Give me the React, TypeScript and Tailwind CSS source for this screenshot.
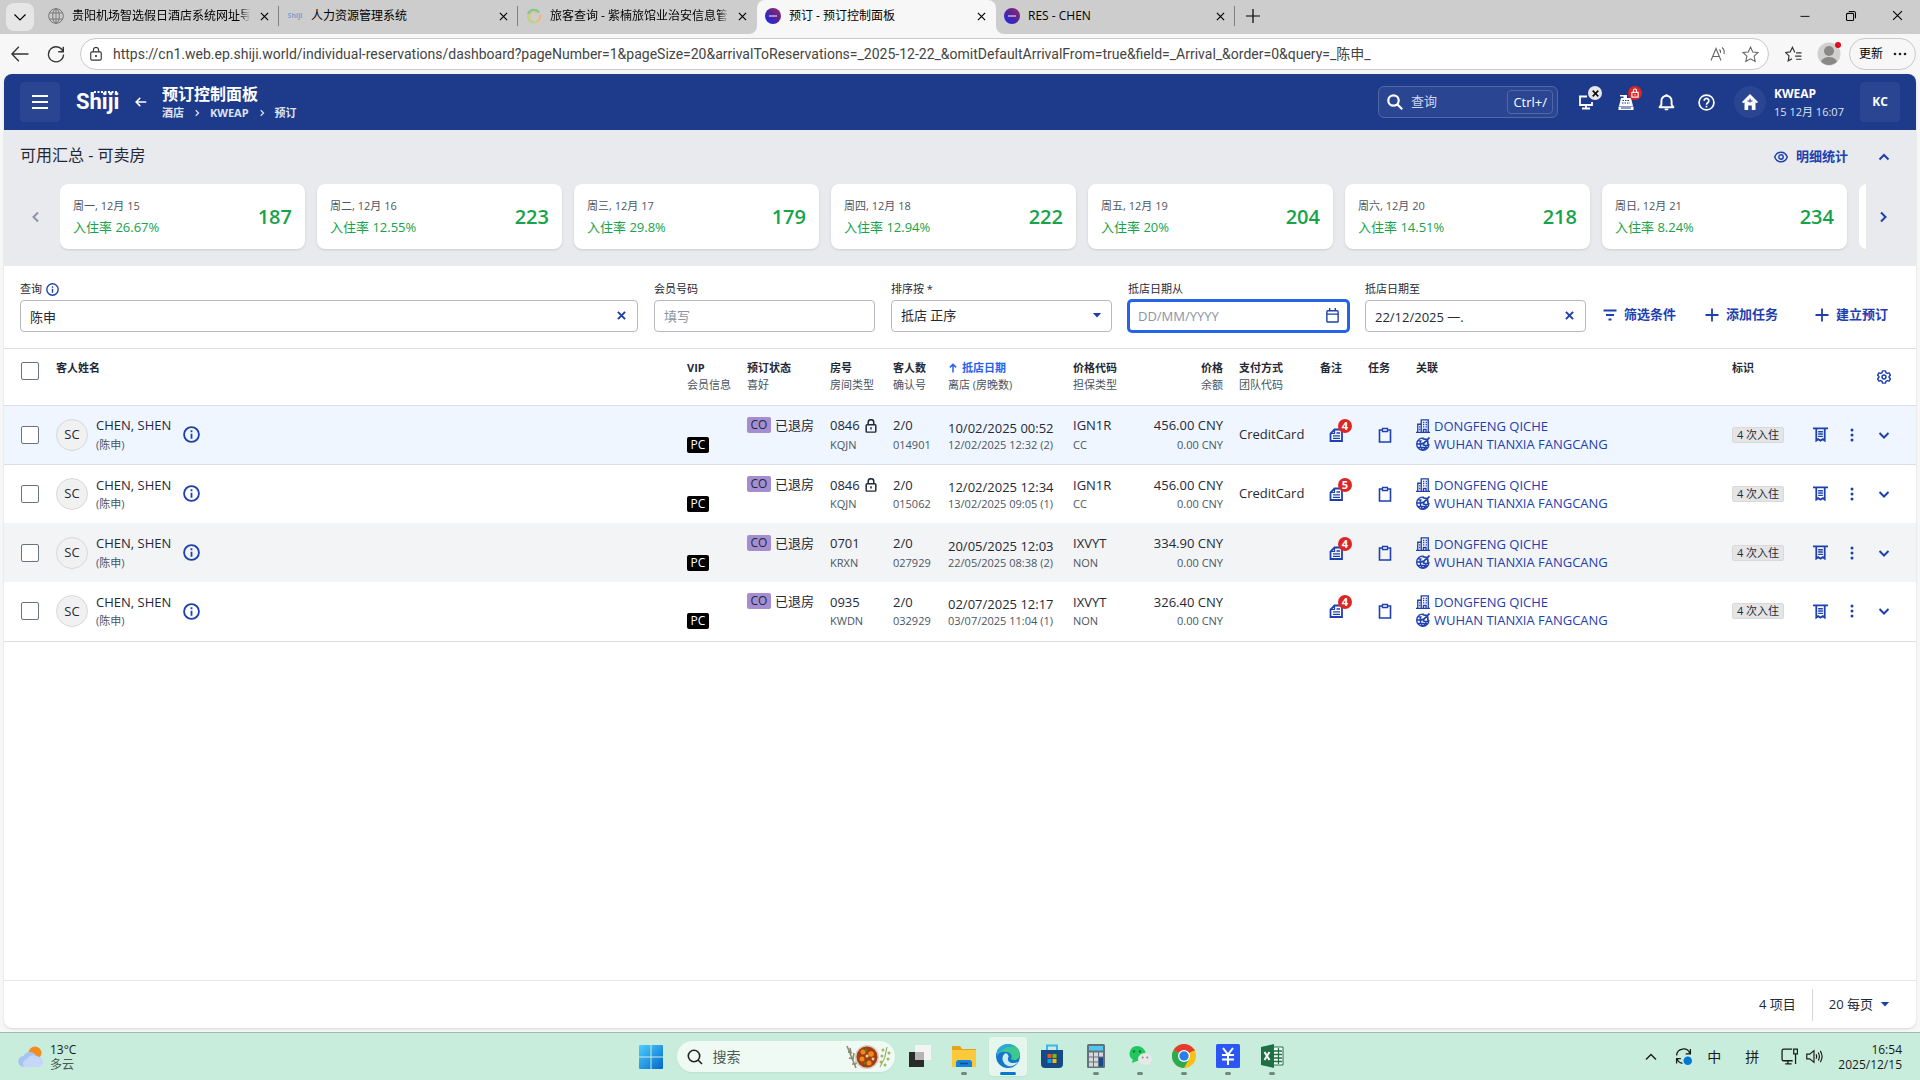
import React from "react";

type P = { className?: string };
type SP = P & { children: React.ReactNode; box?: string; sw?: number };

function Line({ className = "size-4", children, box = "0 0 16 16", sw = 1.5 }: SP) {
  return (
    <svg viewBox={box} className={className} fill="none" stroke="currentColor" strokeWidth={sw} aria-hidden="true">
      {children}
    </svg>
  );
}

const Cross = ({ className = "size-2.5", sw = 1.3 }: P & { sw?: number }) => (
  <Line box="0 0 10 10" className={className} sw={sw}>
    <path d="M1 1l8 8M9 1l-8 8" />
  </Line>
);
const Caret = () => (
  <svg viewBox="0 0 10 6" className="h-[5px] w-2.5 shrink-0" aria-hidden="true">
    <path d="M0 0h10L5 5.5z" fill="#1e40af" />
  </svg>
);
const Chevron = ({ d, className = "size-4" }: P & { d: string }) => (
  <Line className={className} sw={2}>
    <path d={d} />
  </Line>
);
const DOWN = "M3.5 6l4.5 4.5L12.500 6";
const UP = "M3.5 10.500L8 6l4.500 4.500";
const RIGHT = "M6 3.500L10.500 8 6 12.500";
const LEFT = "M10 3.500L5.500 8l4.500 4.500";

const Info = ({ className = "size-4" }: P) => (
  <Line className={className} sw={1.7}>
    <circle cx="8" cy="8" r="7" />
    <path d="M8 7.200V12M8 4v1.800" />
  </Line>
);

/* ---------- browser chrome ---------- */

const Globe = () => (
  <Line className="size-4 text-[#777]" sw={1}>
    <circle cx="8" cy="8" r="7.300" />
    <ellipse cx="8" cy="8" rx="3.300" ry="7.300" />
    <path d="M8 .7v14.600M1.500 5h13M1.500 11h13" />
  </Line>
);
const Swirl = () => (
  <Line className="size-4" sw={2.2}>
    <path d="M2 6a6.300 6.300 0 0 1 11-1.500" stroke="#7fc98a" />
    <path d="M14 6.500a6.300 6.300 0 0 1-4 7.500" stroke="#f0b97a" />
    <path d="M9 14.200A6.300 6.300 0 0 1 1.900 7" stroke="#b5d67c" />
    <path d="M5 9.500a3.300 3.300 0 0 1 5.500-4" stroke="#e9c17c" strokeWidth="1.200" />
  </Line>
);
const Orb = () => (
  <svg viewBox="0 0 16 16" className="size-4" aria-hidden="true">
    <defs>
      <linearGradient id="orb" x1="0" y1="1" x2="1" y2="0">
        <stop offset="0" stopColor="#1028ff" />
        <stop offset=".55" stopColor="#5b2590" />
        <stop offset="1" stopColor="#9a2a6a" />
      </linearGradient>
    </defs>
    <circle cx="8" cy="8" r="8" fill="url(#orb)" />
    <path d="M4 8h8" stroke="#cdb8e6" strokeWidth="1.400" />
  </svg>
);
const MiniShiji = () => <span className="text-[7px] leading-4 font-bold text-[#7f9fd0]">Shiji</span>;

const tabs = [
  { title: "贵阳机场智选假日酒店系统网址导航", icon: <Globe />, shape: "bg-[#cdcdcd]", sep: true },
  { title: "人力资源管理系统", icon: <MiniShiji />, shape: "bg-[#cdcdcd]", sep: true },
  { title: "旅客查询 - 紫楠旅馆业治安信息管理", icon: <Swirl />, shape: "bg-[#cdcdcd] rounded-br-lg", sep: false },
  { title: "预订 - 预订控制面板", icon: <Orb />, shape: "active", sep: false },
  { title: "RES - CHEN", icon: <Orb />, shape: "bg-[#cdcdcd] rounded-bl-lg", sep: true },
];

function TabStrip() {
  return (
    <div className="flex h-[34px] bg-[#f7f7f7] text-xs text-black">
      <div className="flex w-10 items-center bg-[#cdcdcd] pl-1.5">
        <button aria-label="标签页操作" className="flex h-7 w-7 items-center justify-center rounded-lg bg-[#e6e6e6]">
          <Line className="size-4" sw={1.2}>
            <path d="M2.500 5.500L8 11l5.500-5.500" />
          </Line>
        </button>
      </div>
      {tabs.map((t) => {
        const active = t.shape === "active";
        return (
          <div
            key={t.title}
            className={
              active
                ? "w-[239px] bg-linear-to-b from-[#cdcdcd] from-50% to-[#f7f7f7] to-50%"
                : "w-[239px] " + t.shape
            }
          >
            <div
              className={
                "flex h-full items-center gap-2 pb-0.5 pl-2 " + (active ? "rounded-t-lg bg-[#f7f7f7]" : "")
              }
            >
              <span className="flex size-4 shrink-0 items-center justify-center">{t.icon}</span>
              <button
                className={
                  "h-5 flex-1 overflow-hidden text-left whitespace-nowrap " +
                  (t.title.length > 14 ? "mask-r-from-95%" : "")
                }
              >
                {t.title}
              </button>
              <button aria-label="关闭标签页" className="flex w-3 justify-center">
                <Cross className="size-[9px]" />
              </button>
              <span className={"h-5 w-px " + (t.sep ? "bg-[#808080]" : "")} />
            </div>
          </div>
        );
      })}
      <div className="flex flex-1 items-center justify-between bg-[#cdcdcd] pb-0.5">
        <button aria-label="新建标签页" className="flex w-9 justify-center">
          <Line className="size-4" sw={1.2}>
            <path d="M8 1v14M1 8h14" />
          </Line>
        </button>
        <div className="flex">
          <button aria-label="最小化" className="flex w-[46px] justify-center">
            <Line className="size-3" sw={1.2}><path d="M2 8.500h12" /></Line>
          </button>
          <button aria-label="还原" className="flex w-[46px] justify-center">
            <Line className="size-3" sw={1.4}>
              <rect x="2" y="4.500" width="9.500" height="9.500" rx="1.500" />
              <path d="M5 2h6.500A2.500 2.500 0 0 1 14 4.500V11" />
            </Line>
          </button>
          <button aria-label="关闭" className="flex w-[46px] justify-center">
            <Cross className="size-[11px]" sw={1} />
          </button>
        </div>
      </div>
    </div>
  );
}

function AddressBar() {
  return (
    <div className="flex h-10 items-center bg-[#f7f7f7] pr-1 text-[#333]">
      <button aria-label="后退" className="flex w-10 justify-center">
        <Line className="size-[18px]" sw={1.2}><path d="M15.500 8H1M7 1.500L.8 8 7 14.500" /></Line>
      </button>
      <button aria-label="刷新" className="flex w-8 justify-center">
        <Line className="size-[18px]" sw={1.2}><path d="M14.300 6A6.700 6.700 0 1 0 14.700 8.500M14.500 1.500V6H10" /></Line>
      </button>
      <div className="ml-2 flex h-8 flex-1 items-center rounded-full border border-[#c9c9c9] bg-white pr-0.5 pl-2">
        <Line className="size-3.5 text-[#333]" sw={1.3}>
          <rect x="2" y="5.500" width="12" height="9.500" rx="1.500" />
          <path d="M5 5.500V3.500a3 3 0 0 1 6 0v2" />
          <circle cx="8" cy="10.300" r=".6" fill="currentColor" />
        </Line>
        <label htmlFor="url" className="sr-only">地址</label>
        <input
          id="url"
          readOnly
          className="ml-2.5 w-0 flex-1 bg-transparent font-['Roboto','Noto_Sans_CJK_SC',sans-serif] text-sm text-[#444] outline-none"
          value="https://cn1.web.ep.shiji.world/individual-reservations/dashboard?pageNumber=1&pageSize=20&arrivalToReservations=_2025-12-22_&omitDefaultArrivalFrom=true&field=_Arrival_&order=0&query=_陈申_"
        />
        <button aria-label="朗读此页内容" className="flex w-8 justify-center text-[#666]">
          <Line className="size-4" sw={1.1}>
            <path d="M1 14.500L6 2.500l5 12M2.800 10.500h6.500M9.500 3.500q1.500 1.500 1 3.500M12 1.500q3 2.500 2 6.500" />
          </Line>
        </button>
        <button aria-label="收藏" className="flex w-8 justify-center text-[#666]">
          <Line className="size-[17px]" sw={1}>
            <path d="M8 1l2.100 4.600 5 .5-3.700 3.400 1 5L8 12l-4.400 2.500 1-5L.9 6.100l5-.5z" />
          </Line>
        </button>
      </div>
      <button aria-label="收藏夹" className="ml-3 flex w-6 justify-center">
        <Line className="size-[17px]" sw={1.1}>
          <path d="M9.500 5.600H9L7 1.200 4.900 5.600l-4.400.5 3.300 3.200-.8 4.700 3.600-2M10.500 6.500h5M9.500 9.500h6M10.500 12.500h5" />
        </Line>
      </button>
      <button aria-label="用户配置" className="relative ml-3 size-6">
        <svg viewBox="0 0 24 24" className="size-6">
          <circle cx="12" cy="12" r="11.500" fill="#d2d0ce" />
          <circle cx="12" cy="9" r="5" fill="#8a8886" />
          <path d="M4 19.500Q6 15 12 15t8 4.500a11 11 0 0 1-16 0z" fill="#8a8886" />
        </svg>
        <span className="absolute top-0 right-0 size-1.5 rounded-full bg-[#e00b1c]" />
      </button>
      <button className="ml-2 flex h-8 w-[67px] items-center justify-between rounded-full border border-[#c9c9c9] pr-[7px] pl-[9px] text-xs text-black">
        更新
        <svg viewBox="0 0 16 4" className="h-1 w-4"><g fill="#222"><circle cx="3" cy="2" r="1.300" /><circle cx="8" cy="2" r="1.300" /><circle cx="13" cy="2" r="1.300" /></g></svg>
      </button>
    </div>
  );
}

/* ---------- application ---------- */

function AppHeader() {
  return (
    <header className="flex h-14 items-center bg-[#1e3a8a] px-4 text-white">
      <button aria-label="菜单" className="flex size-10 items-center justify-center rounded bg-[#2a4592]">
        <Line className="size-4" sw={2}><path d="M0 2h16M0 8h16M0 14h16" /></Line>
      </button>
      <a href="#home" className="relative ml-4 w-[42px] font-['Roboto',sans-serif] text-[22px] leading-8 font-bold">
        Shiji
        <svg viewBox="0 0 24 4" className="absolute top-1 right-0 h-1 w-6" aria-hidden="true">
          <path d="M0 2h24" stroke="#fff" strokeWidth="2" strokeDasharray="2 1.500" />
        </svg>
      </a>
      <button aria-label="返回" className="ml-4 flex w-3.5 justify-center">
        <Line className="size-3" sw={2}><path d="M15 8H2M7 2.500L1.500 8 7 13.500" /></Line>
      </button>
      <div className="ml-3.5 flex flex-1 flex-col pt-px">
        <h1 className="text-base leading-5 font-bold">预订控制面板</h1>
        <nav aria-label="breadcrumb" className="flex items-center gap-2 text-[11px] leading-[18px] font-bold text-[#dbe3f5]">
          <a href="#hotel">酒店</a>
          <Chevron d={RIGHT} className="size-2.5" />
          <a href="#kweap">KWEAP</a>
          <Chevron d={RIGHT} className="size-2.5" />
          <a href="#reservations">预订</a>
        </nav>
      </div>
      <div className="flex h-8 w-[180px] items-center rounded-md border border-[#5068a6] bg-[#2a4592] pr-1 pl-2">
        <Line className="size-4" sw={2.2}><circle cx="6.500" cy="6.500" r="5.200" /><path d="M10.500 10.500L15.200 15.200" /></Line>
        <input aria-label="查询" placeholder="查询" className="ml-2 w-0 flex-1 bg-transparent text-[13px] outline-none placeholder:text-[#cdd6ec]" />
        <kbd className="rounded border border-[#5068a6] px-[5px] font-[inherit] text-[13px] leading-[22px]">Ctrl+/</kbd>
      </div>
      <button aria-label="连接" className="relative ml-2 flex w-10 justify-center">
        <Line className="size-4" sw={1.800}><path d="M9 2.500H2v8.500h12V8M8 11v3.500M4 14.500h8" /></Line>
        <span className="absolute -top-2 left-[22px] flex size-3.5 items-center justify-center rounded-full bg-[#e5e7eb] text-[#111]">
          <Cross className="size-[7px]" sw={2.4} />
        </span>
      </button>
      <button aria-label="收银" className="relative flex w-10 justify-center">
        <svg viewBox="0 0 16 16" className="size-4" fill="#fff">
          <path d="M2 1h7v3h4l2 8H1l2-8h2.500V2.500H2zM.5 12.500h15V16H.5z" />
          <path d="M4.500 6.500h7M4 9h8" stroke="#1e3a8a" strokeWidth="1.200" strokeDasharray="1.500 1" />
          <path d="M3 14h10" stroke="#1e3a8a" />
        </svg>
        <span className="absolute -top-2 left-[22px] flex size-3.5 items-center justify-center rounded-full bg-[#dc2626]">
          <Line className="size-2.5" sw={1.8}><rect x="3" y="7" width="10" height="7.500" /><path d="M5.500 7V4a2.500 2.500 0 0 1 5 0v3M8 10v2" /></Line>
        </span>
      </button>
      <button aria-label="通知" className="flex w-10 justify-center">
        <Line className="size-[17px]" sw={1.8}>
          <path d="M1.500 12.500h13L12.800 10V6.500a4.800 4.800 0 0 0-9.600 0V10z" strokeLinejoin="round" />
          <path d="M6.300 14.500h3.400M8 .3v1.500" />
        </Line>
      </button>
      <button aria-label="帮助" className="flex w-10 justify-center">
        <Line className="size-[17px]" sw={1.600}>
          <circle cx="8" cy="8" r="7" />
          <path d="M5.800 6.300a2.200 2.200 0 1 1 3.400 1.900Q8 9 8 10M8 11v1.600" />
        </Line>
      </button>
      <span className="ml-2 flex size-8 items-center justify-center rounded-full bg-[#2a4592]">
        <svg viewBox="0 0 18 18" className="size-[18px]" fill="#fff">
          <path d="M9 1l8 8-1.300 1.300L14.500 9.200V17h-3.700v-4.500H7.200V17H3.500V9.200l-1.200 1.100L1 9z" />
          <path d="M9 5.500v4M6.500 8h5" stroke="#1e3a8a" strokeWidth="1" />
        </svg>
      </span>
      <div className="ml-2 w-[86px] pt-px whitespace-nowrap">
        <p className="text-xs leading-[18px] font-bold">KWEAP</p>
        <p className="text-[11px] leading-[18px] text-[#dbe3f5]">15 12月 16:07</p>
      </div>
      <button className="flex size-10 items-center justify-center rounded bg-[#2a4592] text-xs font-bold">KC</button>
    </header>
  );
}

const days = [
  ["周一, 12月 15", "26.67%", "187"],
  ["周二, 12月 16", "12.55%", "223"],
  ["周三, 12月 17", "29.8%", "179"],
  ["周四, 12月 18", "12.94%", "222"],
  ["周五, 12月 19", "20%", "204"],
  ["周六, 12月 20", "14.51%", "218"],
  ["周日, 12月 21", "8.24%", "234"],
];

function Availability() {
  return (
    <section className="h-[136px] bg-[#e9eaee] text-[#1f2937]">
      <div className="flex h-[54px] items-center justify-between pr-4 pl-4">
        <h2 className="pb-1 text-base">可用汇总 - 可卖房</h2>
        <div className="flex items-center text-[#1e40af]">
          <button className="flex items-center gap-2 text-[13px] font-bold">
            <Line className="size-3.5" sw={1.7}>
              <path d="M.8 8Q3 2.500 8 2.500T15.200 8Q13 13.500 8 13.500T.8 8z" />
              <circle cx="8" cy="8" r="2.500" />
            </Line>
            明细统计
          </button>
          <button aria-label="收起" className="ml-5 flex w-8 justify-center"><Chevron d={UP} /></button>
        </div>
      </div>
      <div className="flex items-center">
        <button aria-label="上一页" className="flex w-14 justify-center pl-2 text-[#8b93a5]"><Chevron d={LEFT} /></button>
        <ul className="-mb-1 flex flex-1 gap-3 overflow-hidden pb-1">
          {days.map(([d, rate, n]) => (
            <li key={d} className="flex h-[65px] w-[245px] shrink-0 items-center justify-between rounded-lg bg-white px-[13px] shadow-sm">
              <div>
                <p className="text-[11px] leading-5 text-[#4b5563]">{d}</p>
                <p className="text-[13px] leading-[22px] text-[#16a34a]">入住率 {rate}</p>
              </div>
              <p className="text-xl font-semibold text-[#16a34a]">{n}</p>
            </li>
          ))}
          <li className="h-[65px] w-[245px] shrink-0 rounded-lg bg-white" />
        </ul>
        <button aria-label="下一页" className="flex w-[50px] justify-center pr-4 text-[#1e40af]"><Chevron d={RIGHT} /></button>
      </div>
    </section>
  );
}

const base = "h-8 w-full rounded bg-white text-[13px] text-[#1f2937] outline-none placeholder:text-[#8b93a5]";
const field = base + " border border-[#b6bac5] px-[9px]";

function Filters() {
  return (
    <form className="flex h-[83px] items-end border-b border-[#dcdee2] pr-7 pb-4 pl-4 text-[#1f2937]" onSubmit={(e) => e.preventDefault()}>
      <div className="mr-4 flex-1">
        <div className="flex h-[22px] items-center gap-1 text-[11px]">
          <label htmlFor="q">查询</label>
          <Info className="size-[13px] text-[#1e40af]" />
        </div>
        <div className="relative">
          <input id="q" className={field} defaultValue="陈申" />
          <button aria-label="清除" className="absolute top-[11px] right-3 text-[#1e40af]"><Cross className="size-[9px]" sw={2.2} /></button>
        </div>
      </div>
      <div className="mr-4 w-[221px]">
        <label htmlFor="member" className="block text-[11px] leading-[22px]">会员号码</label>
        <input id="member" className={field} placeholder="填写" />
      </div>
      <div className="mr-4 w-[221px]">
        <label htmlFor="sort" className="block text-[11px] leading-[22px]">排序按 *</label>
        <div className="relative">
          <select id="sort" className={field + " appearance-none"}>
            <option>抵店 正序</option>
          </select>
          <span className="pointer-events-none absolute top-[13px] right-2.5"><Caret /></span>
        </div>
      </div>
      <div className="mr-4 w-[221px]">
        <label htmlFor="from" className="block text-[11px] leading-[22px]">抵店日期从</label>
        <div className="relative">
          <input id="from" className={base + " border-2 border-[#2563eb] px-2 ring-1 ring-[#2563eb]"} placeholder="DD/MM/YYYY" />
          <button aria-label="选择日期" className="absolute top-2 right-[9px] text-[#1e40af]">
            <Line className="size-[15px]" sw={1.5}>
              <rect x="2" y="3" width="12" height="12" rx="1" />
              <path d="M2 6.500h12M5 0v3M11 0v3" />
            </Line>
          </button>
        </div>
      </div>
      <div className="mr-4 w-[221px]">
        <label htmlFor="to" className="block text-[11px] leading-[22px]">抵店日期至</label>
        <div className="relative">
          <input id="to" className={field} defaultValue="22/12/2025 一." />
          <button aria-label="清除日期" className="absolute top-[11px] right-3 text-[#1e40af]"><Cross className="size-[9px]" sw={2.2} /></button>
        </div>
      </div>
      <div className="flex h-8 items-center pb-0.5 text-[13px] font-bold whitespace-nowrap text-[#1e40af]">
        <button className="flex items-center gap-1.5">
          <Line className="size-4" sw={1.8}><path d="M1.500 3.500h13M4 8h8M6.500 12.500h3" /></Line>
          筛选条件
        </button>
        <button className="ml-7 flex items-center gap-1.5">
          <Line className="size-4" sw={1.800}><path d="M8 1.500v13M1.500 8h13" /></Line>
          添加任务
        </button>
        <button className="ml-9 flex items-center gap-1.5">
          <Line className="size-4" sw={1.800}><path d="M8 1.500v13M1.500 8h13" /></Line>
          建立预订
        </button>
      </div>
    </form>
  );
}

const rows = [
  { id: 1, room: "0846", lock: true, type: "KQJN", conf: "014901", a: "10/02/2025 00:52", d: "12/02/2025 12:32 (2)", rate: "IGN1R", g: "CC", price: "456.00 CNY", pay: "CreditCard", notes: 4, cls: "bg-[#eff6ff] border-b border-[#d9dde5]" },
  { id: 2, room: "0846", lock: true, type: "KQJN", conf: "015062", a: "12/02/2025 12:34", d: "13/02/2025 09:05 (1)", rate: "IGN1R", g: "CC", price: "456.00 CNY", pay: "CreditCard", notes: 5, cls: "bg-white" },
  { id: 3, room: "0701", lock: false, type: "KRXN", conf: "027929", a: "20/05/2025 12:03", d: "22/05/2025 08:38 (2)", rate: "IXVYT", g: "NON", price: "334.90 CNY", pay: "", notes: 4, cls: "bg-[#f3f4f6]" },
  { id: 4, room: "0935", lock: false, type: "KWDN", conf: "032929", a: "02/07/2025 12:17", d: "03/07/2025 11:04 (1)", rate: "IXVYT", g: "NON", price: "326.40 CNY", pay: "", notes: 4, cls: "bg-white border-b border-[#dcdee2]" },
];

const Check = ({ label }: { label: string }) => (
  <input type="checkbox" aria-label={label} className="ml-[17px] block size-[18px] appearance-none rounded-xs border border-[#6b7280] bg-white" />
);

function Two({ a, b, low = false }: { a: React.ReactNode; b: React.ReactNode; low?: boolean }) {
  return (
    <>
      <span className={low ? "block pt-0.5 text-[13px] leading-[18px]" : "flex h-[19px] items-center text-[13px]"}>{a}</span>
      <span className={low ? "block text-[11px] leading-4 text-[#4b5563]" : "block text-[11px] leading-[17px] text-[#4b5563]"}>{b}</span>
    </>
  );
}

function Head({ a, b = "", right = false }: { a: React.ReactNode; b?: string; right?: boolean }) {
  return (
    <th scope="col" className={"pt-2.5 align-top leading-[17px] font-normal " + (right ? "pr-4 text-right" : "text-left")}>
      <span className="block font-bold">{a}</span>
      <span className="block text-[#4b5563]">{b}</span>
    </th>
  );
}

function Reservations() {
  return (
    <table className="w-full table-fixed border-collapse text-[#1f2937]">
      <colgroup>
        <col className="w-[52px]" />
        <col />
        <col className="w-[60px]" />
        <col className="w-[83px]" />
        <col className="w-[63px]" />
        <col className="w-[55px]" />
        <col className="w-[125px]" />
        <col className="w-[66px]" />
        <col className="w-[100px]" />
        <col className="w-[81px]" />
        <col className="w-12" />
        <col className="w-12" />
        <col className="w-[316px]" />
        <col className="w-[72px]" />
        <col className="w-8" />
        <col className="w-8" />
        <col className="w-12" />
      </colgroup>
      <thead>
        <tr className="h-14 border-b border-[#dcdee2] text-[11px] whitespace-nowrap">
          <td className="pt-[13px] align-top"><Check label="全选" /></td>
          <Head a="客人姓名" />
          <Head a="VIP" b="会员信息" />
          <Head a="预订状态" b="喜好" />
          <Head a="房号" b="房间类型" />
          <Head a="客人数" b="确认号" />
          <Head
            a={
              <button className="flex items-center gap-1 text-[#2563eb]">
                <Line className="size-2.5" sw={2.4}><path d="M8 15V2M3 7l5-5 5 5" /></Line>抵店日期
              </button>
            }
            b="离店 (房晚数)"
          />
          <Head a="价格代码" b="担保类型" />
          <Head a="价格" b="余额" right />
          <Head a="支付方式" b="团队代码" />
          <Head a="备注" />
          <Head a="任务" />
          <Head a="关联" />
          <Head a="标识" />
          <td />
          <td />
          <td className="text-[#1e40af]">
            <button aria-label="表格设置" className="flex w-8 justify-center">
              <Line className="size-3.5" sw={1.7}>
                <path d="M6.300 1h3.400l.5 2 1.600.9 2-.6 1.500 2.700L13.800 7.500v1l1.500 1.500-1.500 2.700-2-.6-1.600.9-.5 2H6.300l-.5-2-1.600-.9-2 .6L.7 10l1.500-1.500v-1L.7 6l1.500-2.700 2 .6L5.800 3z" strokeLinejoin="round" />
                <circle cx="8" cy="8" r="2.200" />
              </Line>
            </button>
          </td>
        </tr>
      </thead>
      <tbody>
        {rows.map((r) => (
          <tr key={r.id} className={"h-[59px] whitespace-nowrap " + r.cls}>
            <td><Check label={"选择 CHEN, SHEN " + r.conf} /></td>
            <td>
              <div className="flex items-center">
                <span className="flex size-8 items-center justify-center rounded-full border border-[#d6d8dc] bg-[#f1f1f1] text-[13px]">SC</span>
                <div className="ml-2"><Two a="CHEN, SHEN" b="(陈申)" /></div>
                <button aria-label="客人信息" className="ml-3 text-[#1e40af]"><Info className="size-[17px]" /></button>
              </div>
            </td>
            <td className="pt-4">
              <span className="inline-block w-[22px] rounded-xs bg-black text-center text-xs leading-4 text-white">PC</span>
            </td>
            <td className="pb-5">
              <div className="flex items-center text-[13px] leading-4">
                <span className="mr-1 w-6 rounded-xs bg-[#a48ed1] text-center text-xs leading-4">CO</span>
                已退房
              </div>
            </td>
            <td>
              <Two
                a={
                  <>
                    {r.room}
                    {r.lock && (
                      <Line className="ml-1 size-3.5" sw={1.7}>
                        <rect x="2.500" y="6.500" width="11" height="8.500" rx="1" />
                        <path d="M4.800 6.500V4a3.200 3.200 0 0 1 6.400 0v2.500M8 9.500v2.500" />
                      </Line>
                    )}
                  </>
                }
                b={r.type}
              />
            </td>
            <td><Two a="2/0" b={r.conf} /></td>
            <td><Two a={r.a} b={r.d} low /></td>
            <td><Two a={r.rate} b={r.g} /></td>
            <td className="pr-4 text-right">
              <div className="flex flex-col items-end"><Two a={r.price} b="0.00 CNY" /></div>
            </td>
            <td className="text-[13px]">{r.pay}</td>
            <td className="text-[#1e40af]">
              <button aria-label="备注" className="relative ml-2 block">
                <Line className="size-4" sw={1.8}>
                  <path d="M6.500 2.500H14V14H2.500V6.500z" />
                  <path d="M6.500 2.500v4h-4" strokeWidth="1.200" />
                  <path d="M8.500 6h3.500M5 8.800h7M5 11.300h7" strokeWidth="1.300" />
                </Line>
                <span className="absolute -top-2 left-2.5 size-3.5 rounded-full bg-[#dc2626] text-center text-[11px] leading-3.5 font-bold text-white">{r.notes}</span>
              </button>
            </td>
            <td className="text-[#1e40af]">
              <button aria-label="任务" className="ml-[9px] block">
                <Line className="size-4" sw={1.600}><path d="M2.500 3h11v12h-11z" /><path d="M5.500 1.500h5v3h-5z" fill="#fff" strokeWidth="1.300" /></Line>
              </button>
            </td>
            <td className="text-[13px] leading-[18px] text-[#1e40af]">
              <a href="#company" className="flex items-center gap-1">
                <Line className="size-3.5" sw={1.5}>
                  <path d="M0 15.300h16M2 15V6h4M6 15V1h8v14M8.500 15v-3h3v3" />
                  <path d="M8 4h1.500M11 4h1.500M8 6.500h1.500M11 6.500h1.500M8 9h1.500M11 9h1.500M3.500 9H5M3.500 12H5" />
                </Line>
                DONGFENG QICHE
              </a>
              <a href="#agency" className="flex items-center gap-1">
                <Line className="size-3.5" sw={1.5}>
                  <path d="M9 1.300A7 7 0 1 0 14.800 8M1 8h6M2.500 4.500h4M2 12h12M7.500 15Q4 11 5 5M7.500 15q4-2 4-6M9 9.500h5" />
                  <path d="M15.500.5L9 7M13 3L7.500 2M13 3l.8 6M9 7L6 7.500M9 7l-.5 3" strokeWidth="2" />
                </Line>
                WUHAN TIANXIA FANGCANG
              </a>
            </td>
            <td>
              <span className="block w-[52px] rounded-xs border border-[#d9d9d9] bg-[#e5e5e5] text-center text-[11px] leading-3.5">4 次入住</span>
            </td>
            <td className="text-[#1e40af]">
              <button aria-label="账单" className="flex w-8 justify-center">
                <Line className="size-[15px]" sw={1.9}>
                  <path d="M0 1.500h16M3.500 2v12.500l2-1.500 2.500 1.500 2.500-1.500 2 1.500V2" />
                  <path d="M5.500 5h5M5.500 7.500h5M5.500 10h5" strokeWidth="1.500" />
                </Line>
              </button>
            </td>
            <td className="text-[#1e40af]">
              <button aria-label="更多" className="flex w-8 justify-center">
                <svg viewBox="0 0 4 14" className="h-3.5 w-1" fill="currentColor"><circle cx="2" cy="2" r="1.500" /><circle cx="2" cy="7" r="1.500" /><circle cx="2" cy="12" r="1.500" /></svg>
              </button>
            </td>
            <td className="text-[#1e40af]">
              <button aria-label="展开" className="flex w-8 justify-center"><Chevron d={DOWN} /></button>
            </td>
          </tr>
        ))}
      </tbody>
    </table>
  );
}

/* ---------- taskbar ---------- */

const taskIcons: { name: string; dot: boolean; art: React.ReactNode }[] = [
  { name: "任务视图", dot: false, art: (<><rect x="1" y="8" width="15" height="15" fill="#2a2a2a" /><rect x="7" y="1" width="16" height="15" fill="#f4f4f4" /><rect x="7" y="8" width="9" height="8" fill="#b4b4b4" /></>) },
  { name: "文件资源管理器", dot: true, art: (<><path d="M0 2h8l2 3h14v17H0z" fill="#e2a51b" /><path d="M0 6h24v17H0z" fill="#fcc83c" /><path d="M4 23v-4a3 3 0 0 1 3-3h10a3 3 0 0 1 3 3v4z" fill="#1583d8" /><path d="M8 19.500h8" stroke="#0b4f94" strokeWidth="1.500" /></>) },
  { name: "Edge", dot: true, art: (<><circle cx="12" cy="12" r="12" fill="#1674c9" /><path d="M1 8C4-2 22-3 24 10c0 6-6 7-9 5 2-4-1-7-5-7-4-.5-7 0-9 4z" fill="#3bc98f" /><path d="M1 8C4 0 14-2 19 3 12 2 5 5 1 12z" fill="#2aa9dc" /><path d="M10 9c-5 2-5 10 2 13 4 1 8-1 10-4-5 2-11 1-10-4 1-1 1-3-2-5z" fill="#c9edf0" /></>) },
  { name: "Microsoft Store", dot: false, art: (<><path d="M7 6V1.500h10V6" fill="none" stroke="#35b9f0" strokeWidth="2" /><path d="M1 6h22v14a4 4 0 0 1-4 4H5a4 4 0 0 1-4-4z" fill="#174a84" /><path d="M7.500 10h4v4h-4z" fill="#f25022" /><path d="M12.500 10h4v4h-4z" fill="#7fba00" /><path d="M7.500 15h4v4h-4z" fill="#00a4ef" /><path d="M12.500 15h4v4h-4z" fill="#ffb900" /></>) },
  { name: "计算器", dot: true, art: (<><rect x="3" width="18" height="24" rx="1.500" fill="#66707a" /><rect x="5" y="2" width="14" height="4.500" fill="#4cc9f0" /><path d="M5 8.500h4v4H5zM10 8.500h4v4h-4zM15 8.500h4v4h-4zM5 13.500h4v4H5zM10 13.500h4v4h-4zM5 18.500h4v4H5zM10 18.500h4v4h-4z" fill="#d3d8dc" /><path d="M15 13.500h4v9h-4z" fill="#17498a" /></>) },
  { name: "微信", dot: true, art: (<><path d="M9 2a8.500 7.500 0 0 1 0 15l-5 2 .8-3.500A8 7.500 0 0 1 9 2z" fill="#21c65e" /><circle cx="6" cy="7.500" r="1.200" fill="#0d7a36" /><circle cx="12" cy="7.500" r="1.200" fill="#0d7a36" /><ellipse cx="17" cy="15" rx="7" ry="6" fill="#e6e9e8" /><path d="M19 19l3 3-.5-4z" fill="#e6e9e8" /><circle cx="14.700" cy="13.500" r="1" fill="#8a8f8d" /><circle cx="19.300" cy="13.500" r="1" fill="#8a8f8d" /></>) },
  { name: "Chrome", dot: true, art: (<><circle cx="12" cy="12" r="12" fill="#fbc116" /><path d="M12 12L1.600 6A12 12 0 0 1 22.400 6z" fill="#e33b2e" /><path d="M1.600 6A12 12 0 0 0 12 24l5-9-5-3z" fill="#2da94f" /><path d="M12 6h10.400" stroke="#e33b2e" strokeWidth="2" /><circle cx="12" cy="12" r="6" fill="#fff" /><circle cx="12" cy="12" r="4.700" fill="#2b7de9" /></>) },
  { name: "支付", dot: true, art: (<><rect width="24" height="24" rx="1.500" fill="#2b56f5" /><path d="M7 4l5 6.500L17 4M6 11h12M6 15.500h12M12 11v10" fill="none" stroke="#fff" strokeWidth="2" /></>) },
  { name: "Excel", dot: true, art: (<><path d="M13 3h10v18H13z" fill="#fff" stroke="#1d7044" /><path d="M14 7h8M14 10.500h8M14 14h8M14 17.500h8M18.500 4v16" stroke="#1d7044" strokeWidth="1.300" /><path d="M1 3l13-3v24L1 21z" fill="#1d7044" /><path d="M4.500 8l5 8M9.500 8l-5 8" stroke="#fff" strokeWidth="2" /></>) },
];

function Taskbar() {
  return (
    <footer className="flex h-12 items-center border-t border-[#a5b9af] bg-[#c8eddc] text-[#1a1a1a]">
      <button className="flex flex-1 items-center pl-[18px] text-left text-xs">
        <svg viewBox="0 0 26 22" className="h-[22px] w-[26px]" aria-hidden="true">
          <circle cx="17" cy="7" r="6.500" fill="#f28c1c" />
          <path d="M6 21a5.500 5.500 0 0 1-.5-11A7 7 0 0 1 18 9.500 6 6 0 0 1 20 21z" fill="#a6c3f2" />
          <path d="M6 21a5 5 0 0 1 3-8 7 7 0 0 1 11-2 5 5 0 0 1 0 10z" fill="#c4d7f8" />
        </svg>
        <span className="ml-1.5"><span className="block leading-[15px]">13°C</span><span className="block leading-[15px] text-[#4b5a53]">多云</span></span>
      </button>
      <div className="ml-3 flex items-center">
        <button aria-label="开始" className="mr-3.5">
          <svg viewBox="0 0 24 24" className="size-6">
            <defs><linearGradient id="win" x1="0" y1="0" x2="1" y2="1"><stop offset="0" stopColor="#4fd0ff" /><stop offset="1" stopColor="#0067c8" /></linearGradient></defs>
            <path d="M0 1a1 1 0 0 1 1-1h10.500v11.500H0zM12.500 0H23a1 1 0 0 1 1 1v10.500H12.500zM0 12.500h11.500V24H1a1 1 0 0 1-1-1zM12.500 12.500H24V23a1 1 0 0 1-1 1H12.500z" fill="url(#win)" />
          </svg>
        </button>
        <div className="mr-[3px] flex h-[31px] w-[218px] items-center rounded-full bg-[#effaf4] pr-1 pl-2.5 shadow-xs">
          <Line className="size-4 text-[#222]" sw={1.6}><circle cx="7" cy="7" r="5.700" /><path d="M11 11l4 4" /></Line>
          <input aria-label="搜索" placeholder="搜索" className="ml-2.5 w-0 flex-1 bg-transparent text-sm outline-none placeholder:text-[#505a55]" />
          <svg viewBox="0 0 46 26" className="h-[26px] w-[46px]" aria-hidden="true">
            <path d="M2 2q4 10 9 22M3 8l4 1M5 4l1 5M4 14l5 1M9 9l-1 6M7 20l4 0M12 15l-1 5" fill="none" stroke="#8c9070" strokeWidth="1.600" />
            <path d="M42 3q-1 11-7 20" fill="none" stroke="#8aa05a" />
            <g fill="#a9b45c"><circle cx="38" cy="6" r="1.500" /><circle cx="44" cy="9" r="1.500" /><circle cx="37" cy="12" r="1.500" /><circle cx="43" cy="15" r="1.500" /><circle cx="36" cy="18" r="1.500" /><circle cx="40" cy="21" r="1.500" /></g>
            <circle cx="22" cy="13" r="12" fill="#d8cdbd" /><circle cx="22" cy="13" r="10.500" fill="#a33d14" />
            <g fill="#ef8a1e"><circle cx="18" cy="8" r="2.500" /><circle cx="26" cy="10" r="2.800" /><circle cx="17" cy="15" r="2.500" /><circle cx="24" cy="19" r="2.500" /></g>
            <g fill="#e8d9a0"><circle cx="22" cy="12" r="1.500" /><circle cx="28" cy="15" r="1.400" /></g>
            <g fill="#5d7a25"><circle cx="21" cy="6" r="1.500" /><circle cx="20" cy="19" r="1.500" /></g>
          </svg>
        </div>
        {taskIcons.map((t) => {
          const on = t.name === "Edge";
          return (
            <button
              key={t.name}
              aria-label={t.name}
              className={"mx-[3px] flex h-[39px] w-[38px] flex-col items-center rounded pt-[7px] " + (on ? "bg-[#e4f6ee] shadow-xs" : "")}
            >
              <svg viewBox="0 0 24 24" className="size-6">{t.art}</svg>
              {t.dot && <span className={on ? "mt-1 h-[3px] w-4 rounded-full bg-[#0078d4]" : "mt-1 h-[3px] w-1.5 rounded-full bg-[#73877e]"} />}
            </button>
          );
        })}
      </div>
      <div className="flex flex-1 items-center justify-end pr-[18px]">
        <button aria-label="显示隐藏的图标" className="mr-4"><Line className="size-4" sw={1.4}><path d="M3 10.500l5-5 5 5" /></Line></button>
        <button aria-label="同步" className="mr-[15px]">
          <Line className="size-[17px]" sw={1.2}>
            <path d="M1.500 7A6.500 6.500 0 0 1 14 5M14.500 1v4.500H10M7 14.500Q3 13.500 2 10.500M1.500 14.500v-4.500h4" />
            <circle cx="12" cy="12" r="4" fill="#0078d4" stroke="none" />
          </Line>
        </button>
        <button className="mr-6 text-sm">中</button>
        <button className="mr-[22px] text-sm">拼</button>
        <button aria-label="网络和音量" className="flex items-center gap-2">
          <Line className="size-[17px]" sw={1.2}><path d="M10.500 1H2.500A1.500 1.500 0 0 0 1 2.500v8A1.500 1.500 0 0 0 2.500 12H11M6.500 12v3M4 15h6M12 1h3.500v4.500H12zM13.700 5.500V15" /></Line>
          <Line className="size-[17px]" sw={1.1}><path d="M.7 5.800h2.800L7.500 2.500v11L3.500 10.200H.7zM9.500 6q1 2 0 4M11.500 4.300q2.200 3.700 0 7.400M13.500 2.700q3.300 5.300 0 10.600" /></Line>
        </button>
        <p className="ml-[15px] text-right text-xs leading-[15px]">16:54<br />2025/12/15</p>
      </div>
    </footer>
  );
}

export default function App() {
  return (
    <div className="flex min-h-screen flex-col bg-[#f7f7f7] font-['Open_Sans','Noto_Sans_CJK_SC',sans-serif]">
      <TabStrip />
      <AddressBar />
      <main className="mx-1 mb-1 flex flex-1 flex-col overflow-hidden rounded-lg bg-white shadow-sm">
        <AppHeader />
        <Availability />
        <Filters />
        <Reservations />
        <div className="mt-auto flex h-12 items-center justify-end border-t border-[#e5e7eb] pr-[26px] text-[13px] text-[#1f2937]">
          <span>4 项目</span>
          <span className="mx-4 h-8 w-px bg-[#d5d7dc]" />
          <button className="flex items-center gap-[7px]">20 每页 <Caret /></button>
        </div>
      </main>
      <Taskbar />
    </div>
  );
}
